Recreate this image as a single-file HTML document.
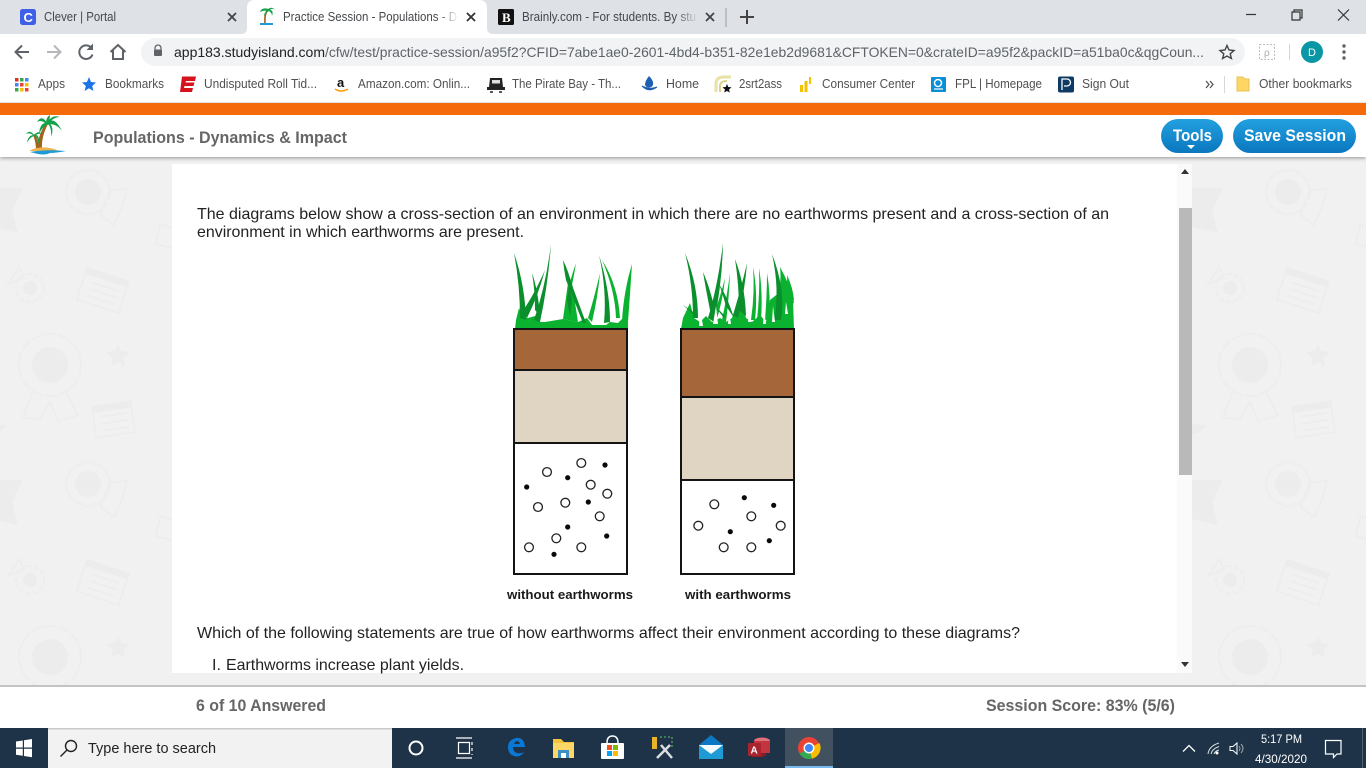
<!DOCTYPE html>
<html lang="en">
<head>
<meta charset="utf-8">
<title>Practice Session - Populations - Dynamics &amp; Impact</title>
<style>
html,body{margin:0;padding:0;width:1366px;height:768px;overflow:hidden;background:#f1f1f1}
svg{display:block;position:absolute;left:0;top:0}
text{font-family:"Liberation Sans",Arial,sans-serif;white-space:pre}
.ui{font-size:12.5px;fill:#45484c}
.bm{font-size:12.5px;fill:#505050}
.q{font-size:16px;fill:#222}
.lb{font-size:13px;font-weight:bold;fill:#1a1a1a}
.hd{font-size:17px;font-weight:bold;fill:#666}
.bt{font-size:17px;font-weight:bold;fill:#fff}
.ic{fill:none;stroke:#5f6368;stroke-width:2}
.wm{fill:none;stroke:#ededed;stroke-width:2}
.wf{fill:#ececec}
</style>
</head>
<body>
<svg width="1366" height="768" viewBox="0 0 1366 768" xmlns="http://www.w3.org/2000/svg">
<defs>
<pattern id="wall" patternUnits="userSpaceOnUse" x="-100" y="160" width="1200" height="292">
<g transform="translate(100,-160)">
<polygon class="wf" points="-12,188 23,188 12,210 18,233 -12,226"/>
<circle class="wm" cx="88" cy="192" r="22" stroke-dasharray="8 2"/>
<circle class="wf" cx="88" cy="192" r="13"/>
<polygon class="wm" points="110,190 127,189 122,207 114,225 100,215"/>
<g transform="rotate(15 165 235)"><rect class="wm" x="158" y="226" width="24" height="20"/></g>
<circle class="wm" cx="30" cy="288" r="14" stroke-dasharray="5 2"/>
<circle class="wf" cx="30" cy="288" r="7"/>
<polygon class="wm" points="8,284 19,267 24,277"/>
<g transform="rotate(18 103 290)"><rect class="wm" x="81" y="274" width="44" height="33"/><rect class="wf" x="81" y="274" width="44" height="6"/><path class="wm" d="M91 286H118M91 293H118M91 300H118"/></g>
<circle class="wm" cx="50" cy="365" r="31" stroke-dasharray="12 2" stroke-width="2.500"/>
<circle class="wf" cx="50" cy="365" r="18"/>
<path class="wm" d="M33 392L23 417L40 420L50 402L58 421L78 415L66 392"/>
<polygon class="wf" points="118,344 121,351 130,352 123,358 125,366 118,362 111,366 113,358 106,352 115,351"/>
<g transform="rotate(-8 113 420)"><rect class="wm" x="94" y="404" width="39" height="31"/><rect class="wf" x="94" y="404" width="39" height="6"/><path class="wm" d="M102 415H128M102 422H128M102 429H128"/></g>
<polygon class="wf" points="-12,424 7,425 -2,433 -12,435"/>
</g>
</pattern>
<linearGradient id="btn" x1="0" y1="0" x2="0" y2="1"><stop offset="0" stop-color="#22a0df"/><stop offset="1" stop-color="#0b77bf"/></linearGradient>
<linearGradient id="fadeA" x1="0" x2="1"><stop offset="0" stop-color="#fff" stop-opacity="0"/><stop offset="1" stop-color="#fff"/></linearGradient>
<linearGradient id="fadeB" x1="0" x2="1"><stop offset="0" stop-color="#dee1e6" stop-opacity="0"/><stop offset="1" stop-color="#dee1e6"/></linearGradient>
<filter id="grain" x="0" y="0" width="100%" height="100%"><feTurbulence type="fractalNoise" baseFrequency="0.55" numOctaves="2" seed="4"/><feColorMatrix values="0 0 0 0 0.72  0 0 0 0 0.64  0 0 0 0 0.52  0.9 0 0 0 -0.25"/></filter>
<filter id="sh" x="-5%" y="-50%" width="110%" height="200%"><feDropShadow dx="0" dy="1" stdDeviation="2" flood-color="#000" flood-opacity=".4"/></filter>
</defs>

<!-- page background -->
<rect width="1366" height="768" fill="#f1f1f1"/>
<rect y="157" width="1366" height="530" fill="url(#wall)"/>

<!-- content panel -->
<rect x="172" y="164" width="1020" height="509" fill="#fff"/>
<rect x="1177" y="164" width="15" height="509" fill="#fafafa"/>
<rect x="1179" y="208" width="13" height="267" fill="#b9b9b9"/>
<polygon points="1185,169 1189,174 1181,174" fill="#333"/>
<polygon points="1185,667 1189,662 1181,662" fill="#333"/>

<text class="q" x="197" y="219" textLength="912" lengthAdjust="spacingAndGlyphs">The diagrams below show a cross-section of an environment in which there are no earthworms present and a cross-section of an</text>
<text class="q" x="197" y="237" textLength="327" lengthAdjust="spacingAndGlyphs">environment in which earthworms are present.</text>

<!-- left grass -->
<g fill="#0bb22f">
<path d="M515 329L516 320L519 308L522 316L528 318L535 316L540 322L545 322L563 319L578 322L587 318L592 325L606 325L610 322L618 323L622 319L628 322L628 329Z"/>
<path d="M563 319L568 283L572 283L578 322Z"/>
<path d="M616 318Q615 290 602 260Q618 285 620 318Z"/>
<path d="M588 318Q595 295 600 273Q598 296 592 322Z"/>
<path d="M622 320Q624 290 632 264Q630 295 628 322Z"/>
<path d="M566 298Q570 280 576 263Q573 282 569 298Z"/>
</g>
<g fill="#0a8f2c">
<path d="M520 318Q520 285 514 253Q525 285 526 320Z"/>
<path d="M534 320Q546 285 551 244Q548 285 540 322Z"/>
<path d="M535 310Q535 290 532 273Q538 290 540 316Z"/>
<path d="M522 312Q534 295 545 270Q538 296 527 318Z"/>
<path d="M566 280Q564 270 563 260Q568 270 572 285L586 323L583 323Z"/>
<path d="M604 323Q607 290 599 255Q610 290 610 322Z"/>
<path d="M567 300L569 285L572 300L570 316Z"/>
</g>

<!-- right grass -->
<g fill="#0bb22f">
<path d="M681 329L683 318L690 303L694 318L700 322L706 316L712 322L720 318L726 322L732 318L740 296L746 318L752 322L760 315L766 322L770 300L780 292L788 296L793 300L794 329Z"/>
<path d="M776 300Q782 285 780 267Q790 285 794 302L786 318Z"/>
<path d="M782 300Q788 290 787 275Q793 288 794 300Z"/>
<path d="M751 320Q755 292 753 267Q758 292 755 320Z"/>
<path d="M757 320Q760 292 759 268Q763 292 761 320Z"/>
<path d="M712 320Q720 298 725 278Q723 300 716 322Z"/>
<path d="M722 320Q727 296 730 273Q729 298 726 322Z"/>
<path d="M765 320Q767 295 767 273Q771 295 769 320Z"/>
</g>
<g fill="#0a8f2c">
<path d="M693 318Q693 285 685 253Q698 285 698 318Z"/>
<path d="M708 318Q718 285 723 243Q722 285 714 322Z"/>
<path d="M710 310Q706 290 703 272Q711 290 716 316Z"/>
<path d="M739 310Q739 285 735 259Q745 285 746 316Z"/>
<path d="M733 315Q742 285 747 263Q745 290 738 318Z"/>
<path d="M774 320Q780 290 772 254Q786 290 781 320Z"/>
<path d="M726 306Q722 292 719 284Q727 296 734 318Z"/>
<path d="M683 305L696 314L695 316Z"/>
<path d="M713 304L725 316L724 318Z"/>
</g>
<g fill="#fff">
<path d="M699 326L700 308L703 326Z"/><path d="M713 324L716 306L718 324Z"/><path d="M728 324L729 310L731 324Z"/>
<path d="M763 324L764 308L766 324Z"/><path d="M748 322L749 304L751 322Z"/><path d="M772 322L773 306L775 322Z"/><path d="M785 314L786 302L788 314Z"/>
</g>

<!-- soil columns -->
<rect x="514" y="329" width="113" height="41" fill="#a5673a"/>
<rect x="514" y="370" width="113" height="73" fill="#e1d5c3"/>
<rect x="514" y="370" width="113" height="73" filter="url(#grain)"/>
<rect x="681" y="329" width="113" height="68" fill="#a5673a"/>
<rect x="681" y="397" width="113" height="83" fill="#e1d5c3"/>
<rect x="681" y="397" width="113" height="83" filter="url(#grain)"/>
<g fill="none" stroke="#141414" stroke-width="2">
<rect x="514" y="329" width="113" height="245"/><path d="M514 370H627M514 443H627"/>
<rect x="681" y="329" width="113" height="245"/><path d="M681 397H794M681 480H794"/>
</g>
<g fill="#fff" stroke="#222" stroke-width="1.300">
<circle cx="547" cy="472" r="4.400"/><circle cx="581.300" cy="463" r="4.400"/><circle cx="590.700" cy="484.700" r="4.400"/><circle cx="607.300" cy="493.700" r="4.400"/><circle cx="538" cy="507" r="4.400"/><circle cx="565.300" cy="502.700" r="4.400"/><circle cx="599.700" cy="516.300" r="4.400"/><circle cx="556.300" cy="538.300" r="4.400"/><circle cx="529" cy="547.300" r="4.400"/><circle cx="581.300" cy="547.300" r="4.400"/>
<circle cx="714.300" cy="504.300" r="4.400"/><circle cx="751.300" cy="516.300" r="4.400"/><circle cx="698.300" cy="525.700" r="4.400"/><circle cx="780.700" cy="525.700" r="4.400"/><circle cx="723.700" cy="547.300" r="4.400"/><circle cx="751.300" cy="547.300" r="4.400"/>
</g>
<g fill="#0a0a0a">
<circle cx="605" cy="465" r="2.600"/><circle cx="567.700" cy="477.700" r="2.600"/><circle cx="526.700" cy="487" r="2.600"/><circle cx="588.300" cy="502" r="2.600"/><circle cx="567.700" cy="527" r="2.600"/><circle cx="606.700" cy="536" r="2.600"/><circle cx="554" cy="554.300" r="2.600"/>
<circle cx="744.300" cy="497.700" r="2.600"/><circle cx="773.700" cy="505.300" r="2.600"/><circle cx="730.300" cy="531.700" r="2.600"/><circle cx="769.300" cy="540.700" r="2.600"/>
</g>
<text class="lb" x="507" y="599" textLength="126" lengthAdjust="spacingAndGlyphs">without earthworms</text>
<text class="lb" x="685" y="599" textLength="106" lengthAdjust="spacingAndGlyphs">with earthworms</text>

<text class="q" x="197" y="638" textLength="823" lengthAdjust="spacingAndGlyphs">Which of the following statements are true of how earthworms affect their environment according to these diagrams?</text>
<text class="q" x="212" y="670">I.</text>
<text class="q" x="226" y="670" textLength="238" lengthAdjust="spacingAndGlyphs">Earthworms increase plant yields.</text>

<!-- site header -->
<rect y="115" width="1366" height="42" fill="#fff" filter="url(#sh)"/>
<rect y="102" width="1366" height="1" fill="#e4e4e4"/>
<rect y="103" width="1366" height="12" fill="#f56b0b"/>
<g>
<path d="M38 150Q37 136 46 123L48 124Q41 137 42 150Z" fill="#a0641e"/>
<path d="M36 150Q36 142 33 135L35 134Q39 142 39 150Z" fill="#a0641e"/>
<g fill="#12a24a">
<path d="M47 123Q54 115 62 131Q55 122 47 125Z"/>
<path d="M47 123Q52 114 60 117Q53 117 47 125Z"/>
<path d="M47 123Q42 114 37 122Q42 119 47 125Z"/>
<path d="M47 123Q40 122 39 134Q43 126 47 125Z"/>
<path d="M47 123Q52 127 51 137Q55 127 48 122Z"/>
<path d="M46 124Q46 117 50 115Q50 119 48 124Z"/>
<path d="M34 135Q30 129 26 134Q30 132 34 136Z"/>
<path d="M34 135Q28 135 27 143Q30 137 34 136Z"/>
<path d="M34 135Q38 130 42 134Q38 133 34 136Z"/>
<path d="M34 135Q38 137 38 144Q41 137 35 134Z"/>
</g>
<path d="M29 151Q38 146 50 148Q56 149 58 151Z" fill="#f0b44c"/>
<path d="M30 152Q46 149 66 151Q56 153 50 153Q44 156 34 153Z" fill="#1e9ad6"/>
</g>
<text class="hd" x="93" y="143" textLength="254" lengthAdjust="spacingAndGlyphs">Populations - Dynamics &amp; Impact</text>
<rect x="1161" y="119" width="62" height="34" rx="17" fill="url(#btn)"/>
<text class="bt" x="1173" y="141" textLength="39" lengthAdjust="spacingAndGlyphs">Tools</text>
<polygon points="1187,145 1195,145 1191,149" fill="#fff"/>
<rect x="1233" y="119" width="123" height="34" rx="17" fill="url(#btn)"/>
<text class="bt" x="1244" y="141" textLength="102" lengthAdjust="spacingAndGlyphs">Save Session</text>

<!-- bottom status bar -->
<rect y="687" width="1366" height="41" fill="#fff"/>
<rect y="685" width="1366" height="2" fill="#c4c4c4"/>
<text class="hd" x="196" y="711" textLength="130" lengthAdjust="spacingAndGlyphs">6 of 10 Answered</text>
<text class="hd" x="986" y="711" textLength="189" lengthAdjust="spacingAndGlyphs">Session Score: 83% (5/6)</text>

<!-- chrome tab strip -->
<rect width="1366" height="34" fill="#dee1e6"/>
<rect y="34" width="1366" height="68" fill="#fff"/>
<path d="M241 34Q247 34 247 28V8Q247 0 255 0H479Q487 0 487 8V28Q487 34 493 34Z" fill="#fff"/>
<rect x="20" y="9" width="16" height="16" rx="2.500" fill="#3f5fe8"/>
<text x="23.500" y="22" font-size="13" font-weight="bold" fill="#fff">C</text>
<text class="ui" x="44" y="21" textLength="72" lengthAdjust="spacingAndGlyphs">Clever | Portal</text>
<path d="M228 13L236 21M236 13L228 21" stroke="#444" stroke-width="1.800"/>

<path d="M265 23Q264 15 268 9" stroke="#a0641e" stroke-width="1.600" fill="none"/>
<path d="M268 9Q262 7 260 12Q264 10 267 11Q264 13 264 16Q267 12 269 11Q272 13 272 16Q274 11 270 9.500Q273 8 275 10Q272 6 268 9Z" fill="#12a24a"/>
<path d="M260 24H273" stroke="#1e9ad6" stroke-width="2"/>
<text class="ui" x="283" y="21" textLength="174" lengthAdjust="spacingAndGlyphs">Practice Session - Populations - D</text>
<rect x="437" y="6" width="22" height="22" fill="url(#fadeA)"/>
<path d="M467 13L475 21M475 13L467 21" stroke="#333" stroke-width="1.800"/>

<rect x="498" y="9" width="16" height="16" rx="1.500" fill="#111"/>
<text x="502" y="22" font-size="13" font-weight="bold" fill="#fff" style="font-family:'Liberation Serif',serif">B</text>
<text class="ui" x="522" y="21" textLength="174" lengthAdjust="spacingAndGlyphs">Brainly.com - For students. By stu</text>
<rect x="676" y="6" width="22" height="22" fill="url(#fadeB)"/>
<path d="M706 13L714 21M714 13L706 21" stroke="#444" stroke-width="1.800"/>
<rect x="725.500" y="8" width="1" height="19" fill="#9aa0a6"/>
<path d="M747 10V24M740 17H754" stroke="#444" stroke-width="2"/>

<!-- window controls -->
<path d="M1246 14.500H1256" stroke="#333" stroke-width="1.200"/>
<path d="M1292 12H1300V20H1292ZM1294 12V10H1302V18H1300" fill="none" stroke="#333" stroke-width="1.200"/>
<path d="M1338 9.500L1349 20.500M1349 9.500L1338 20.500" stroke="#333" stroke-width="1.200"/>

<!-- chrome toolbar -->
<path class="ic" d="M29 52H16M22 45.500L15.500 52L22 58.500"/>
<path d="M47 52H60M54 45.500L60.500 52L54 58.500" fill="none" stroke="#b5b7ba" stroke-width="2"/>
<path class="ic" d="M91.500 48A6.800 6.800 0 1 0 92.500 54.500"/>
<polygon points="93,43.500 93,50 86.500,50" fill="#5f6368"/>
<path class="ic" d="M110.500 52L118 45L125.500 52M113 50V59H123V50" stroke-width="1.800"/>
<rect x="141" y="38" width="1104" height="28" rx="14" fill="#f1f3f4"/>
<path d="M155 49.500V48A3 3 0 0 1 161 48V49.500" fill="none" stroke="#5f6368" stroke-width="1.300"/>
<rect x="154" y="49.500" width="8" height="6.500" rx="1" fill="#5f6368"/>
<text x="174" y="57" font-size="14" fill="#202124" textLength="151" lengthAdjust="spacingAndGlyphs">app183.studyisland.com</text>
<text x="325" y="57" font-size="14" fill="#5f6368" textLength="879" lengthAdjust="spacingAndGlyphs">/cfw/test/practice-session/a95f2?CFID=7abe1ae0-2601-4bd4-b351-82e1eb2d9681&amp;CFTOKEN=0&amp;crateID=a95f2&amp;packID=a51ba0c&amp;qgCoun...</text>
<polygon points="1227,45.500 1229,50 1234,50.500 1230.200,53.800 1231.400,58.500 1227,56 1222.600,58.500 1223.800,53.800 1220,50.500 1225,50" fill="none" stroke="#444" stroke-width="1.400"/>
<rect x="1259.500" y="44.500" width="15" height="15" fill="none" stroke="#bbb" stroke-dasharray="2 1.500"/>
<text x="1264" y="56" font-size="10" fill="#aaa">ρ</text>
<rect x="1289" y="44" width="1" height="16" fill="#d7d7d7"/>
<circle cx="1312" cy="52" r="11" fill="#0a97a5"/>
<text x="1308" y="56" font-size="11" fill="#fff">D</text>
<g fill="#5f6368"><circle cx="1344" cy="46" r="1.700"/><circle cx="1344" cy="52" r="1.700"/><circle cx="1344" cy="58" r="1.700"/></g>

<!-- bookmarks bar -->
<g>
<rect x="15" y="78" width="3.500" height="3.500" fill="#d93025"/><rect x="20" y="78" width="3.500" height="3.500" fill="#34a853"/><rect x="25" y="78" width="3.500" height="3.500" fill="#4285f4"/>
<rect x="15" y="83" width="3.500" height="3.500" fill="#4285f4"/><rect x="20" y="83" width="3.500" height="3.500" fill="#ea4335"/><rect x="25" y="83" width="3.500" height="3.500" fill="#fbbc04"/>
<rect x="15" y="88" width="3.500" height="3.500" fill="#34a853"/><rect x="20" y="88" width="3.500" height="3.500" fill="#fbbc04"/><rect x="25" y="88" width="3.500" height="3.500" fill="#ea4335"/>
</g>
<text class="bm" x="38" y="88" textLength="27" lengthAdjust="spacingAndGlyphs">Apps</text>
<polygon points="89,77 91,82 96,82.500 92.200,86 93.400,91 89,88.300 84.600,91 85.800,86 82,82.500 87,82" fill="#1a73e8"/>
<text class="bm" x="105" y="88" textLength="59" lengthAdjust="spacingAndGlyphs">Bookmarks</text>
<path d="M182 76.500H196L195 81H186L185.500 82.500H194.500L193.500 86H184.500L184 88H193L192 92H180Z" fill="#d6131d"/>
<text class="bm" x="204" y="88" textLength="113" lengthAdjust="spacingAndGlyphs">Undisputed Roll Tid...</text>
<text x="337" y="87" font-size="13" font-weight="bold" fill="#111">a</text>
<path d="M335 89Q341 93 348 89" fill="none" stroke="#f90" stroke-width="1.500"/>
<text class="bm" x="358" y="88" textLength="112" lengthAdjust="spacingAndGlyphs">Amazon.com: Onlin...</text>
<path d="M490 78H502L503 87H505V90H487V87H489Z" fill="#222"/>
<rect x="492" y="80" width="8" height="3.500" fill="#ddd"/>
<path d="M490 92H493M499 92H502" stroke="#222" stroke-width="1.500"/>
<text class="bm" x="512" y="88" textLength="109" lengthAdjust="spacingAndGlyphs">The Pirate Bay - Th...</text>
<path d="M649 76Q654 81 653 85A4.500 4.500 0 0 1 645 85Q645 81 649 76Z" fill="#1d5fb0"/>
<path d="M642 86Q649 93 657 87Q650 90 642 86Z" fill="#1d5fb0" stroke="#1d5fb0"/>
<text class="bm" x="666" y="88" textLength="33" lengthAdjust="spacingAndGlyphs">Home</text>
<path d="M716 92V84Q716 77 724 77H731" fill="none" stroke="#e8e2a6" stroke-width="3"/>
<path d="M720 92V86Q720 81 727 81" fill="none" stroke="#dcd48a" stroke-width="2"/>
<polygon points="727,84 728.300,87 731.500,87.300 729,89.500 729.800,92.500 727,91 724.200,92.500 725,89.500 722.500,87.300 725.700,87" fill="#111"/>
<text class="bm" x="739" y="88" textLength="43" lengthAdjust="spacingAndGlyphs">2srt2ass</text>
<path d="M800 85H803V92H800ZM804.500 81H807.500V92H804.500ZM809 77H811V84H809Z" fill="#f2c200"/>
<text class="bm" x="822" y="88" textLength="93" lengthAdjust="spacingAndGlyphs">Consumer Center</text>
<rect x="931" y="77" width="15" height="15" rx="1" fill="#0a8fd6"/>
<circle cx="938" cy="83" r="3.500" fill="none" stroke="#fff" stroke-width="1.500"/>
<path d="M934 89H943" stroke="#fff" stroke-width="1.200"/>
<text class="bm" x="955" y="88" textLength="87" lengthAdjust="spacingAndGlyphs">FPL | Homepage</text>
<rect x="1058" y="76.500" width="16" height="16" rx="2" fill="#0e3a66"/>
<path d="M1062 90V79H1067A3.500 3.500 0 0 1 1067 86H1064" fill="none" stroke="#fff" stroke-width="1.300"/>
<text class="bm" x="1082" y="88" textLength="47" lengthAdjust="spacingAndGlyphs">Sign Out</text>
<path d="M1206 81L1209 84.500L1206 88M1210 81L1213 84.500L1210 88" fill="none" stroke="#555" stroke-width="1.300"/>
<rect x="1224" y="76" width="1" height="17" fill="#d7d7d7"/>
<path d="M1237 77H1243L1245 79H1249V91H1237Z" fill="#fdd663" stroke="#e8c45a"/>
<text class="bm" x="1259" y="88" textLength="93" lengthAdjust="spacingAndGlyphs">Other bookmarks</text>

<!-- windows taskbar -->
<rect y="728" width="1366" height="40" fill="#1e3347"/>
<g fill="#fff"><path d="M16 741.500L22.800 740.500V747.500H16ZM24 740.300L32 739V747.500H24ZM16 748.700H22.800V755.700L16 754.700ZM24 748.700H32V757.200L24 756Z"/></g>
<rect x="48" y="729" width="344" height="39" fill="#f2f2f2"/>
<rect x="48" y="728" width="344" height="1.500" fill="#c9c9c9"/>
<circle cx="71" cy="746" r="5.500" fill="none" stroke="#222" stroke-width="1.400"/>
<path d="M67 750L60.500 756.500" stroke="#222" stroke-width="1.400"/>
<text x="88" y="753" font-size="15" fill="#222" textLength="128" lengthAdjust="spacingAndGlyphs">Type here to search</text>
<circle cx="416" cy="748" r="6.500" fill="none" stroke="#fff" stroke-width="2"/>
<path d="M456 738H472M456 758H472M458.500 742.500H469.500V753.500H458.500ZM472 742V745M472 748V751M472 754V755" fill="none" stroke="#fff" stroke-width="1.200"/>
<path d="M524 752Q520 758 514 756Q508 754 508 747Q508 740 516 738Q524 737 525 747H513Q513 752 517 753Q521 754 524 752ZM514 744H520Q519 741 517 741Q515 741 514 744Z" fill="#0b78d6" fill-rule="evenodd"/>
<path d="M553 739H561L564 742H574V744H553Z" fill="#f8c33c"/>
<rect x="553" y="743" width="21" height="15" fill="#ffd766"/>
<rect x="558" y="750" width="11" height="8" fill="#3a8fc4"/>
<rect x="561" y="753" width="5" height="5" fill="#fff"/>
<rect x="601" y="743" width="23" height="16" rx="1" fill="#fff"/>
<path d="M607 743Q607 736 612.500 736Q618 736 618 743" fill="none" stroke="#fff" stroke-width="1.500"/>
<rect x="607" y="745" width="5" height="5" fill="#f25022"/><rect x="613" y="745" width="5" height="5" fill="#7fba00"/>
<rect x="607" y="751" width="5" height="5" fill="#00a4ef"/><rect x="613" y="751" width="5" height="5" fill="#ffb900"/>
<rect x="652" y="737" width="5" height="12" fill="#e8b528"/>
<path d="M660 737H672V748" fill="none" stroke="#5ec46c" stroke-dasharray="2 2"/>
<path d="M657 758L670 745M661 745L672 758" stroke="#d9dee3" stroke-width="2.500"/>
<rect x="699" y="745" width="24" height="14" fill="#1e9ad6"/>
<path d="M699 745L711 754L723 745Z" fill="#fff" opacity=".95"/>
<path d="M699 745L711 735L723 745Z" fill="#0b78c6"/>
<path d="M752 747H766V754Q766 757 760 757H752Z" fill="#8c1d24"/>
<ellipse cx="762" cy="741" rx="8" ry="3.500" fill="#e0707a"/>
<rect x="754" y="741" width="16" height="12" fill="#c2343f"/>
<rect x="748" y="743" width="13" height="13" rx="1" fill="#a8252f"/>
<text x="750.500" y="753.500" font-size="10" font-weight="bold" fill="#fff">A</text>
<rect x="785" y="728" width="48" height="40" fill="#415160"/>
<rect x="785" y="766" width="48" height="2" fill="#76b9ed"/>
<circle cx="809" cy="748" r="11" fill="#ea4335"/>
<path d="M809 748L799.500 753.500A11 11 0 0 0 812 758.600Z" fill="#34a853"/>
<path d="M809 748L812 758.600A11 11 0 0 0 819.500 743Z" fill="#fbbc04"/>
<circle cx="809" cy="748" r="5.500" fill="#fff"/>
<circle cx="809" cy="748" r="4" fill="#4285f4"/>
<path d="M1183 751.500L1189 745.500L1195 751.500" fill="none" stroke="#fff" stroke-width="1.300"/>
<g fill="none" stroke="#d8dde2" stroke-width="1"><path d="M1208 754Q1209 746 1219 743M1211 754Q1212 749 1219 746.500M1214 754Q1215 751 1219 750"/></g>
<circle cx="1217" cy="753" r="1.500" fill="#fff"/>
<path d="M1230 746.500H1233L1237 743V754L1233 750.500H1230Z" fill="none" stroke="#fff"/>
<path d="M1239 746Q1241 748.500 1239 751M1241 744Q1245 748.500 1241 753" fill="none" stroke="#9aa5ae"/>
<text x="1261" y="743" font-size="12" fill="#fff" textLength="41" lengthAdjust="spacingAndGlyphs">5:17 PM</text>
<text x="1255" y="763" font-size="12" fill="#fff" textLength="52" lengthAdjust="spacingAndGlyphs">4/30/2020</text>
<path d="M1325.500 740.500H1341V754H1337L1333.500 757.500V754H1325.500Z" fill="none" stroke="#fff" stroke-width="1.200"/>
<rect x="1362" y="728" width="1" height="40" fill="#51626f"/>
</svg>
</body>
</html>
